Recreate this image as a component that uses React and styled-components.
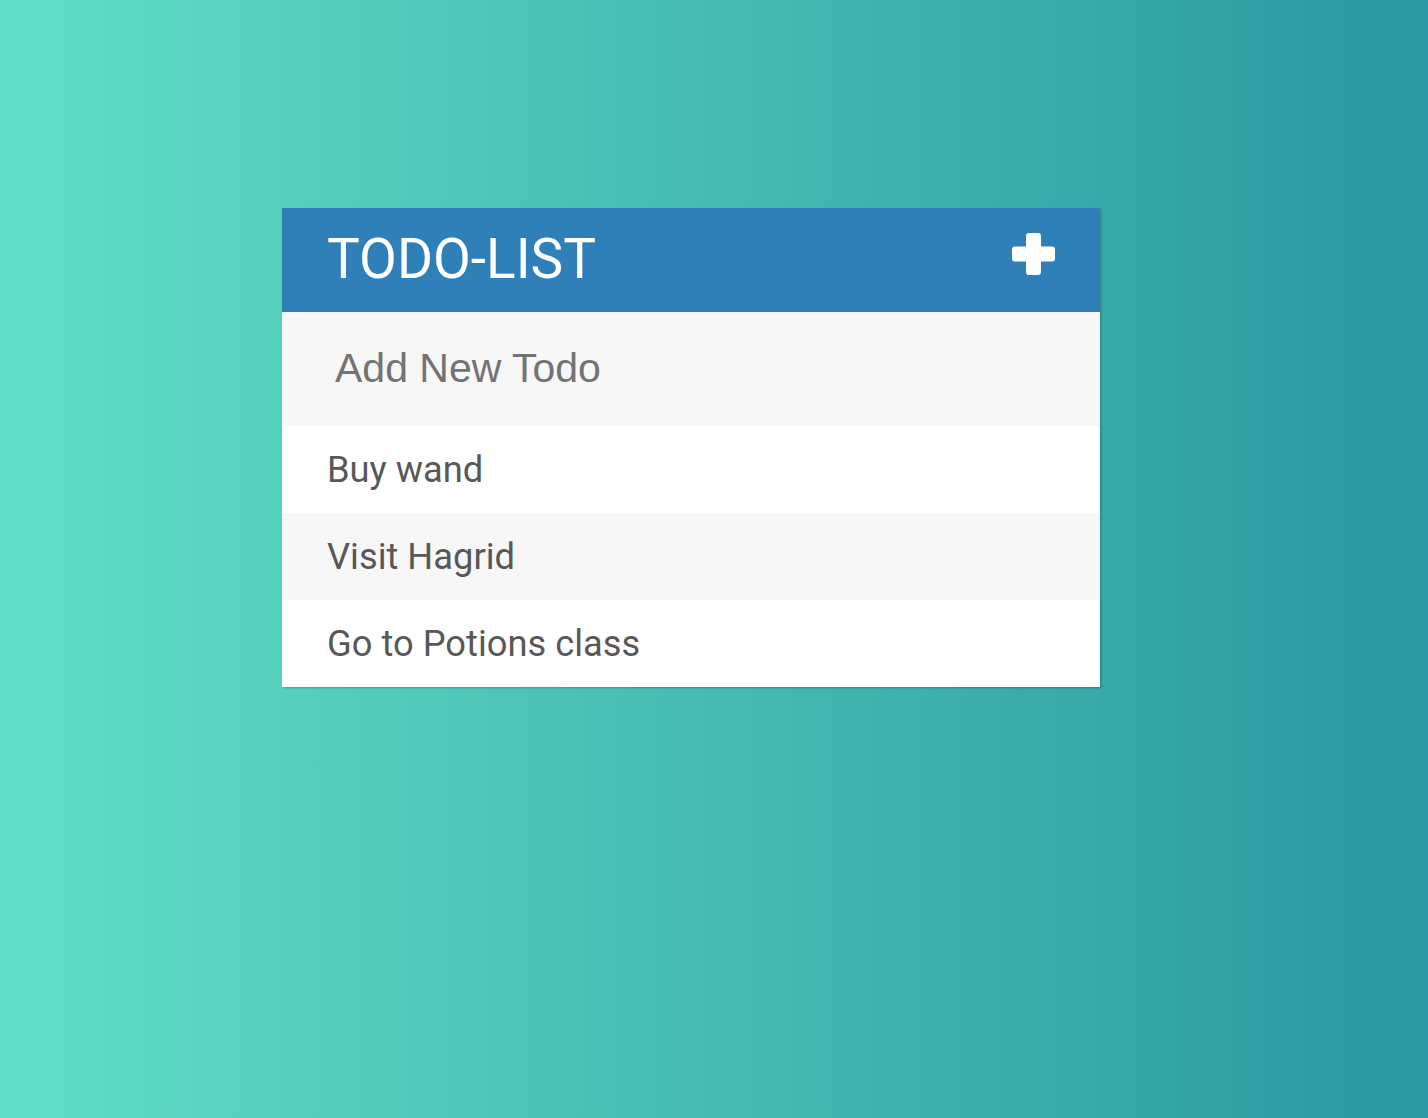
import React from 'react';
import styled, { createGlobalStyle } from 'styled-components';

const GlobalStyle = createGlobalStyle`
  html, body {
    margin: 0;
    padding: 0;
  }
  body {
    font-family: Roboto, "Liberation Sans", sans-serif;
  }
`;

const Page = styled.div`
  min-height: 1118px;
  box-sizing: border-box;
  padding: 208px 0 0 282px;
  background: linear-gradient(to right, #60dfc6 0%, #2a98a0 100%);
`;

const Card = styled.div`
  width: 818px;
  background: #fff;
  box-shadow: 1px 1px 2px rgba(0, 0, 0, 0.25);
`;

const Header = styled.div`
  height: 104px;
  background: #2f80b8;
  display: flex;
  align-items: center;
  justify-content: space-between;
  padding: 0 45px 0 45px;
  box-sizing: border-box;
`;

const Title = styled.h1`
  margin: 0 0 3px;
  font-family: Roboto, sans-serif;
  font-weight: 400;
  font-size: 55px;
  color: #fff;
`;

const AddButton = styled.button`
  border: none;
  background: none;
  padding: 0;
  margin-top: -12px;
  cursor: pointer;
  display: flex;
`;

const NewTodoInput = styled.input`
  display: block;
  width: 100%;
  height: 114px;
  box-sizing: border-box;
  border: none;
  outline: none;
  background: #f7f7f7;
  padding: 0 0 2px 53px;
  font-family: "Liberation Sans", Arial, sans-serif;
  font-size: 41px;
  color: #555;

  &::placeholder {
    color: #737373;
  }
`;

const List = styled.ul`
  list-style: none;
  margin: 0;
  padding: 0;
`;

const Item = styled.li`
  height: 87px;
  display: flex;
  align-items: center;
  padding-left: 45px;
  font-family: Roboto, sans-serif;
  font-size: 36.3px;
  color: #585858;
  background: ${(p) => (p.$shaded ? '#f7f7f7' : '#fff')};
`;

const PlusIcon = () => (
  <svg width="43" height="42" viewBox="0 0 43 42" fill="#fff">
    <rect x="14" y="0" width="15" height="42" rx="3" />
    <rect x="0" y="13.5" width="43" height="15" rx="3" />
  </svg>
);

const todos = ['Buy wand', 'Visit Hagrid', 'Go to Potions class'];

export default function App() {
  return (
    <>
      <GlobalStyle />
      <Page>
        <Card>
          <Header>
            <Title>TODO-LIST</Title>
            <AddButton aria-label="Add todo">
              <PlusIcon />
            </AddButton>
          </Header>
          <NewTodoInput type="text" placeholder="Add New Todo" />
          <List>
            {todos.map((todo, i) => (
              <Item key={todo} $shaded={i % 2 === 1}>
                {todo}
              </Item>
            ))}
          </List>
        </Card>
      </Page>
    </>
  );
}
